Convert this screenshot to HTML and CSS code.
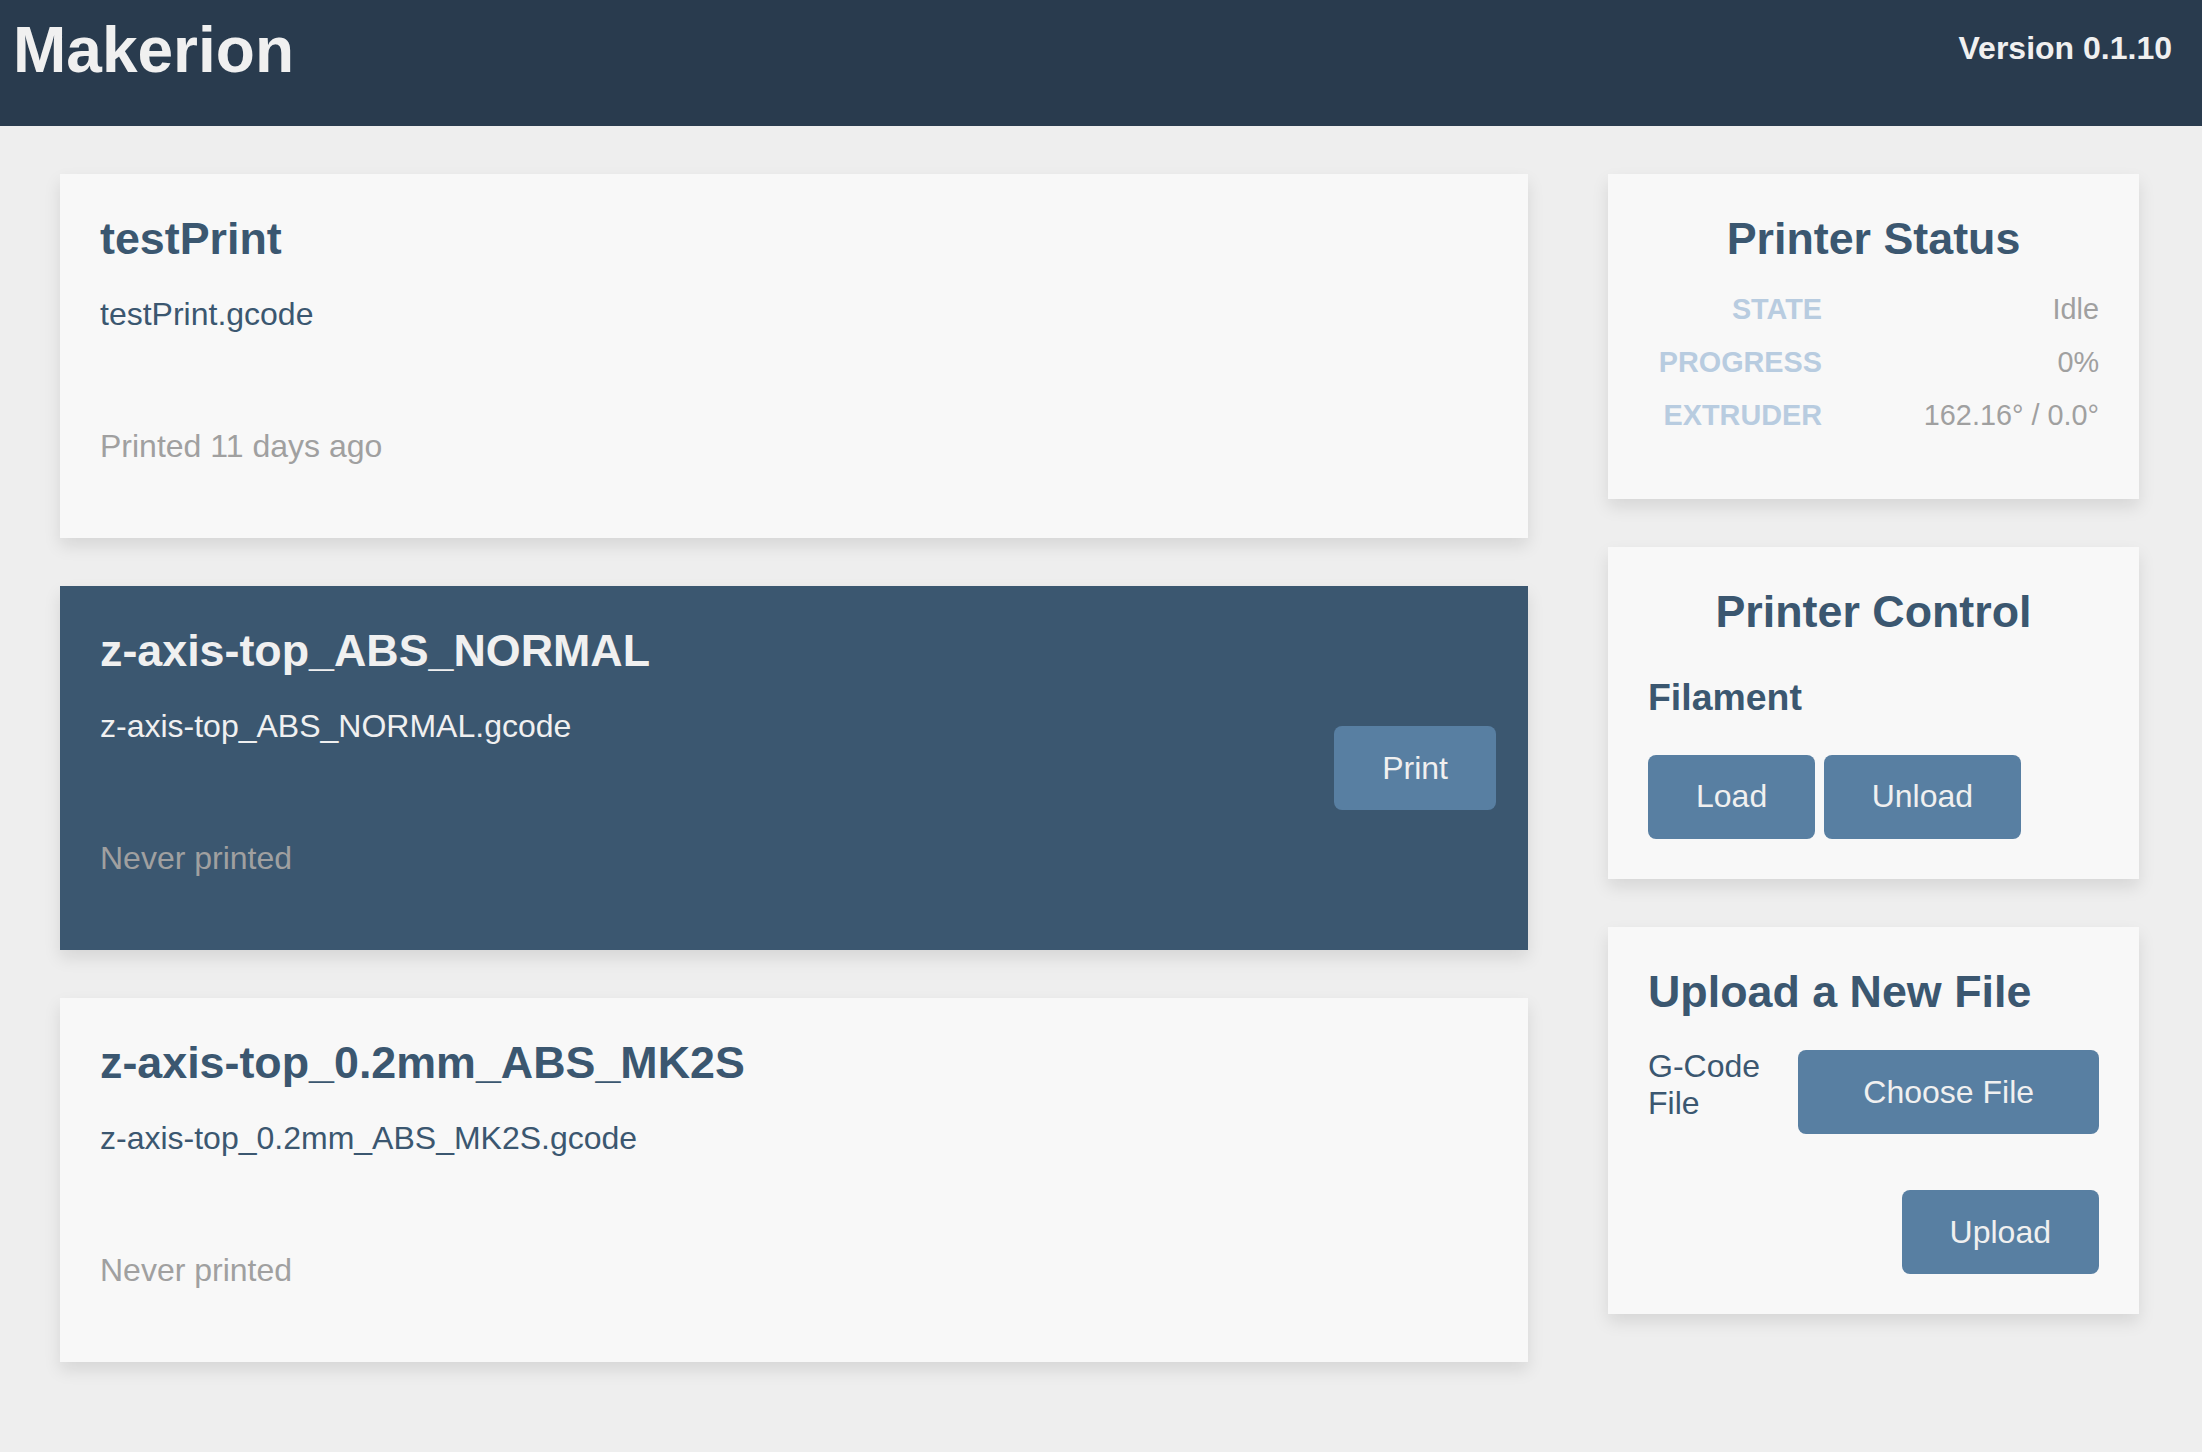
FILE: index.html
```html
<!DOCTYPE html>
<html lang="en">
<head>
<meta charset="utf-8">
<title>Makerion</title>
<link rel="stylesheet" href="styles.css">
</head>
<body>
<header class="topbar">
  <h1 class="brand">Makerion</h1>
  <div class="version">Version 0.1.10</div>
</header>
<main class="layout">
  <section class="files">
    <article class="card file-card">
      <div class="file-info">
        <h2 class="card-title">testPrint</h2>
        <p class="file-name">testPrint.gcode</p>
        <p class="file-meta">Printed 11 days ago</p>
      </div>
    </article>
    <article class="card file-card active">
      <div class="file-info">
        <h2 class="card-title">z-axis-top_ABS_NORMAL</h2>
        <p class="file-name">z-axis-top_ABS_NORMAL.gcode</p>
        <p class="file-meta">Never printed</p>
      </div>
      <button class="btn print-btn">Print</button>
    </article>
    <article class="card file-card">
      <div class="file-info">
        <h2 class="card-title">z-axis-top_0.2mm_ABS_MK2S</h2>
        <p class="file-name">z-axis-top_0.2mm_ABS_MK2S.gcode</p>
        <p class="file-meta">Never printed</p>
      </div>
    </article>
  </section>
  <aside class="sidebar">
    <section class="card panel status-panel">
      <h2 class="card-title centered">Printer Status</h2>
      <div class="status-table">
        <div class="status-label">State</div><div class="status-value">Idle</div>
        <div class="status-label">Progress</div><div class="status-value">0%</div>
        <div class="status-label">Extruder</div><div class="status-value">162.16° / 0.0°</div>
      </div>
    </section>
    <section class="card panel control-panel">
      <h2 class="card-title centered">Printer Control</h2>
      <h3 class="sub-title">Filament</h3>
      <div class="btn-row">
        <button class="btn">Load</button>
        <button class="btn">Unload</button>
      </div>
    </section>
    <section class="card panel upload-panel">
      <h2 class="card-title">Upload a New File</h2>
      <div class="upload-form">
        <label class="upload-label">G-Code File</label>
        <button class="btn choose-btn">Choose File</button>
        <button class="btn upload-btn">Upload</button>
      </div>
    </section>
  </aside>
</main>
</body>
</html>
```
FILE: styles.css
```css
* { box-sizing: border-box; }

body {
  margin: 0;
  background: #eeeeee;
  font-family: "Liberation Sans", Arial, sans-serif;
  font-size: 32px;
  color: #3b5770;
}

.topbar {
  height: 126px;
  background: #293b4e;
  color: #f0f0f0;
  display: flex;
  justify-content: space-between;
  align-items: flex-start;
  padding: 13px 30px 0 13px;
}

.brand {
  margin: 0;
  font-size: 64px;
  font-weight: bold;
  line-height: normal;
}

.version {
  margin-top: 16.5px;
  font-size: 32px;
  font-weight: bold;
}

.layout {
  display: flex;
  align-items: flex-start;
  gap: 80px;
  padding: 48px 63px 48px 60px;
}

.files {
  width: 1468px;
  display: flex;
  flex-direction: column;
  gap: 48px;
}

.sidebar {
  width: 531px;
  display: flex;
  flex-direction: column;
  gap: 48px;
}

.card {
  background: #f8f8f8;
  box-shadow: 0 8px 16px rgba(0, 0, 0, 0.1);
}

.card-title {
  margin: 0;
  font-size: 44.8px;
  font-weight: bold;
  line-height: normal;
  color: #3b5770;
}

.centered { text-align: center; }

.file-card {
  height: 364px;
  padding: 39px 32px 39px 40px;
  display: flex;
  justify-content: space-between;
  align-items: flex-start;
}

.file-name {
  margin: 32px 0 0;
  color: #3b5770;
}

.file-meta {
  margin: 95px 0 0;
  color: #a0a0a0;
}

.file-card.active {
  background: #3b5770;
}

.file-card.active .card-title,
.file-card.active .file-name {
  color: #f0f0f0;
}

.btn {
  font-family: "Liberation Sans", Arial, sans-serif;
  font-size: 32px;
  line-height: normal;
  color: #f0f0f0;
  background: #587fa2;
  border: none;
  border-radius: 8px;
  padding: 23.5px 48px;
  cursor: pointer;
}

.print-btn {
  align-self: center;
}

.panel {
  padding: 39px 40px 40px;
}

.status-panel {
  padding-bottom: 57px;
}

.status-table {
  margin-top: 19px;
  display: grid;
  grid-template-columns: 174px 1fr;
  font-size: 28.8px;
}

.status-label,
.status-value {
  padding: 10px 0;
  text-align: right;
}

.status-label {
  font-weight: bold;
  text-transform: uppercase;
  color: #b8cce0;
}

.status-value {
  color: #a0a0a0;
}

.sub-title {
  margin: 39px 0 0;
  font-size: 37.44px;
  font-weight: bold;
  line-height: normal;
}

.btn-row {
  margin-top: 35.5px;
  display: flex;
  gap: 8.5px;
}

.upload-form {
  margin-top: 33.5px;
  display: grid;
  grid-template-columns: 1fr 2fr;
  row-gap: 56.3px;
  align-items: start;
}

.upload-label {
  color: #3b5770;
  margin-top: -2px;
}

.upload-btn {
  grid-column: 2;
  justify-self: end;
}
```
